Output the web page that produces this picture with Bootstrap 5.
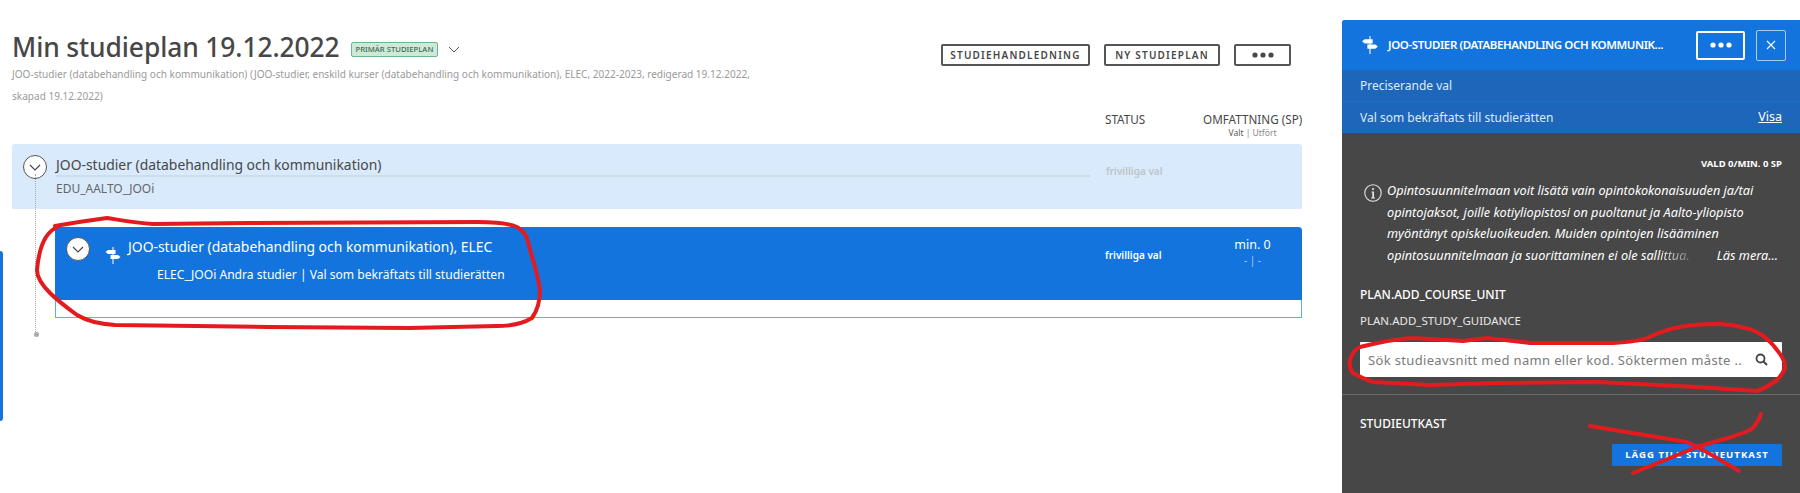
<!DOCTYPE html>
<html lang="sv">
<head>
<meta charset="utf-8">
<title>Min studieplan</title>
<link href="https://cdn.jsdelivr.net/npm/bootstrap@5.3.0/dist/css/bootstrap.min.css" rel="stylesheet">
<style>
html,body{height:493px;overflow:hidden;background:#fff}
body{font-family:"Noto Sans","Open Sans",sans-serif;color:#474747;position:relative}
.page-wrap{height:493px}
.plan-main{width:1342px;padding:29px 40px 0 12px;flex:none}
.plan-title{font-size:26.4px;font-weight:500;line-height:36px;margin:0;color:#474747;letter-spacing:-.1px}
.primary-tag{font-size:7.7px;line-height:13px;border:1px solid #6fb58a;background:#cfe8d8;color:#3d6b50;padding:0 4px;margin-left:11px;border-radius:2px;font-weight:500;margin-top:4px}
.title-chev{margin-left:10px;margin-top:4px}
.plan-sub{font-size:10.05px;line-height:22px;color:#9a9a9a;width:745px;margin-top:-2px}
.head-actions{gap:14px;margin-top:15px;margin-right:11px}
.ghost-btn{height:22px;border:2px solid #555;border-radius:2px;background:#fff;font-size:10px;font-weight:600;letter-spacing:1.2px;color:#474747;padding:0;display:flex;align-items:center;justify-content:center}
.w-guide{width:149px}.w-new{width:116px}.w-more{width:57px}
.col-heads{height:33px;margin-top:4px}
.col-status{width:98px;flex:none}
.col-scope{width:99px;flex:none;text-align:center}
.head-label{font-size:11.7px;line-height:16px;color:#474747;white-space:nowrap}
.head-hint{font-size:8.5px;line-height:12px;color:#5a5a5a;white-space:nowrap}
.head-hint span{color:#888}
.tree{position:relative;height:191px}
.tree-line{position:absolute;left:23px;top:30px;height:160px;border-left:1px dotted #aaa}
.tree-dot{position:absolute;left:21.5px;top:188px;width:5px;height:5px;border-radius:50%;background:#aaa}
.light-row{height:65px;background:#d9eafc;border-radius:3px 3px 0 0;padding:11px 0 0 11px}
.round-toggle{width:24px;height:24px;border-radius:50%;background:#fff;border:1px solid #555;flex:none;display:flex;align-items:center;justify-content:center}
.light-body{width:1034px;margin:0 16px 0 9px;flex:none}
.light-title{font-size:13.9px;line-height:20px;height:22px;border-bottom:2px solid #cfdcea;color:#474747;white-space:nowrap}
.light-code{font-size:12px;line-height:18px;margin-top:3px;color:#666}
.status-txt{font-size:10px;font-weight:600;line-height:14px;white-space:nowrap;padding-top:9px}
.faded{color:#bfc4c9}
.blue-block{margin-left:43px;margin-top:18px;height:91px;border:1px solid #6aa6e8;border-top:0;border-radius:4px 4px 0 0;background:#fff}
.blue-row{height:73px;margin:0 -1px;width:calc(100% + 2px);background:#1274dc;color:#fff;border-radius:4px 4px 0 0}
.blue-body{width:1050px;padding:10px 0 0 11px;flex:none}
.blue-icon{margin:10px 0 0 15px;flex:none}
.blue-text{margin-left:7px}
.blue-title{font-size:13.9px;line-height:20px;white-space:nowrap}
.blue-sub{font-size:12.1px;line-height:18px;margin:9px 0 0 29px;white-space:nowrap}
.status-blue{padding-top:21px}
.scope-blue{padding-top:10px}
.scope-main{font-size:12.5px;line-height:16px}
.scope-sub{font-size:10px;line-height:14px;color:#a8cdf5}
.side-tab{position:absolute;left:0;top:251px;width:3px;height:170px;background:#1274dc;border-radius:0 3px 3px 0}
.side-panel{width:458px;height:473px;margin-top:20px;background:#474747;color:#fff;border-radius:3px 0 0 0;flex:none;overflow:hidden}
.panel-head{height:50px;background:#1274dc;padding:0 14px 0 20px;border-radius:3px 0 0 0}
.panel-title{width:285px;margin-left:10px;font-size:11.5px;font-weight:600;line-height:18px;letter-spacing:-.4px;white-space:nowrap}
.panel-more{width:49px;height:29px;border:2px solid #fff;border-radius:2px;background:transparent;padding:0;margin-left:23px;display:flex;align-items:center;justify-content:center}
.panel-close{width:30px;height:31px;border:1px solid #a8cdf5;border-radius:2px;background:transparent;padding:0;margin-left:11px;display:flex;align-items:center;justify-content:center}
.panel-band{height:31px;background:#1e66ba;color:#dcebfb;font-size:12px;padding:0 18px}
.panel-band+.panel-band{border-top:1px solid #1a6fcb;height:32px}
.band-link{color:#fff;text-decoration:underline;font-size:12.5px}
.panel-body{padding:0 18px}
.pick-count{font-size:9.5px;font-weight:700;line-height:14px;margin-top:24px;text-align:right}
.info-wrap{margin-top:9px;padding-left:4px}
.info-text{font-size:12.7px;line-height:21.6px;font-style:italic;margin-left:5px;position:relative;width:391px;color:#fff;white-space:nowrap}
.read-more{position:absolute;right:0;bottom:0;font-style:italic}
.fade-word{background:linear-gradient(90deg,#fff,#777);-webkit-background-clip:text;background-clip:text;color:transparent}
.add-first{font-size:12px;font-weight:500;line-height:16px;margin-top:21px}
.add-second{font-size:11.5px;line-height:16px;margin-top:10px;color:#e8e8e8}
.search-box{height:35px;background:#fff;margin-top:13px;border-radius:1px}
.search-field{border:0;height:35px;font-size:13px;padding:0 4px 0 8px;color:#666;border-radius:0;box-shadow:none;background:transparent;letter-spacing:.34px}
.search-field::placeholder{color:#7a7a7a;opacity:1}
.search-ico{flex:none;margin:0 14px 0 6px}
.panel-rule{border-top:1px solid #6b6b6b;margin-top:17px}
.draft-head{font-size:12px;font-weight:500;line-height:16px;margin-top:21px}
.add-draft{width:170px;height:22px;background:#1274dc;color:#fff;border:0;border-radius:1px;font-size:9.6px;font-weight:700;letter-spacing:1px;padding:0;margin-top:12px;white-space:nowrap}
.ink-layer{position:absolute;left:0;top:0;pointer-events:none}
</style>
</head>
<body>
<div class="d-flex page-wrap">
  <main class="plan-main">
    <div class="d-flex justify-content-between align-items-start">
      <div>
        <div class="d-flex align-items-center">
          <h1 class="plan-title">Min studieplan 19.12.2022</h1>
          <span class="primary-tag">PRIMÄR STUDIEPLAN</span>
          <svg class="title-chev" width="12" height="7" viewBox="0 0 12 7"><path d="M1 1l5 5 5-5" fill="none" stroke="#555" stroke-width="1"/></svg>
        </div>
        <div class="plan-sub">JOO-studier (databehandling och kommunikation) (JOO-studier, enskild kurser (databehandling och kommunikation), ELEC, 2022-2023, redigerad 19.12.2022, skapad 19.12.2022)</div>
      </div>
      <div class="d-flex head-actions">
        <button class="ghost-btn w-guide" type="button">STUDIEHANDLEDNING</button>
        <button class="ghost-btn w-new" type="button">NY STUDIEPLAN</button>
        <button class="ghost-btn w-more" type="button" aria-label="Mer"><svg width="24" height="6" viewBox="0 0 24 6"><circle cx="4" cy="3" r="2.6" fill="#474747"/><circle cx="12" cy="3" r="2.6" fill="#474747"/><circle cx="20" cy="3" r="2.6" fill="#474747"/></svg></button>
      </div>
    </div>
    <div class="d-flex justify-content-end col-heads">
      <div class="col-status head-label">STATUS</div>
      <div class="col-scope">
        <div class="head-label">OMFATTNING (SP)</div>
        <div class="head-hint">Valt<span> | Utfört</span></div>
      </div>
    </div>
    <div class="tree">
      <div class="tree-line"></div>
      <div class="tree-dot"></div>
      <div class="light-row d-flex">
        <div class="round-toggle"><svg width="12" height="7" viewBox="0 0 12 7"><path d="M1 1l5 5 5-5" fill="none" stroke="#444" stroke-width="1.1"/></svg></div>
        <div class="light-body">
          <div class="light-title">JOO-studier (databehandling och kommunikation)</div>
          <div class="light-code">EDU_AALTO_JOOi</div>
        </div>
        <div class="col-status status-txt faded">frivilliga val</div>
      </div>
      <div class="blue-block">
        <div class="blue-row d-flex">
          <div class="blue-body d-flex">
            <div class="round-toggle"><svg width="12" height="7" viewBox="0 0 12 7"><path d="M1 1l5 5 5-5" fill="none" stroke="#444" stroke-width="1.1"/></svg></div>
            <svg class="blue-icon" width="16" height="17" viewBox="0 0 15 17"><path d="M7 0h1v17H7z" fill="#fff"/><path d="M2.500 3H10v4H2.500L0 5zM5 8h7.500L15 10l-2.500 2H5z" fill="#fff"/></svg>
            <div class="blue-text">
              <div class="blue-title">JOO-studier (databehandling och kommunikation), ELEC</div>
              <div class="blue-sub">ELEC_JOOi Andra studier | Val som bekräftats till studierätten</div>
            </div>
          </div>
          <div class="col-status status-txt status-blue">frivilliga val</div>
          <div class="col-scope scope-blue">
            <div class="scope-main">min. 0</div>
            <div class="scope-sub">- | -</div>
          </div>
        </div>
      </div>
    </div>
  </main>
  <aside class="side-panel">
    <div class="panel-head d-flex align-items-center">
      <svg width="16" height="18" viewBox="0 0 15 17" class="flex-none"><path d="M7 0h1v17H7z" fill="#fff"/><path d="M2.500 3H10v4H2.500L0 5zM5 8h7.500L15 10l-2.500 2H5z" fill="#fff"/></svg>
      <div class="panel-title">JOO-STUDIER (DATABEHANDLING OCH KOMMUNIK...</div>
      <button class="panel-more" type="button" aria-label="Mer"><svg width="24" height="6" viewBox="0 0 24 6"><circle cx="4" cy="3" r="2.600" fill="#fff"/><circle cx="12" cy="3" r="2.600" fill="#fff"/><circle cx="20" cy="3" r="2.600" fill="#fff"/></svg></button>
      <button class="panel-close" type="button" aria-label="Stäng"><svg width="10" height="10" viewBox="0 0 10 10"><path d="M1 1l8 8M9 1l-8 8" stroke="#fff" stroke-width="1.1"/></svg></button>
    </div>
    <div class="panel-band d-flex align-items-center">Preciserande val</div>
    <div class="panel-band d-flex align-items-center justify-content-between"><span>Val som bekräftats till studierätten</span><span class="band-link">Visa</span></div>
    <div class="panel-body">
      <div class="pick-count">VALD 0/MIN. 0 SP</div>
      <div class="d-flex info-wrap">
        <svg class="flex-none mt-1" width="18" height="18" viewBox="0 0 18 18"><circle cx="9" cy="9" r="8.200" fill="none" stroke="#e6e6e6" stroke-width="1.100"/><circle cx="9" cy="5" r="1.100" fill="#e6e6e6"/><path d="M7.500 7.500H10v6h1v1H7v-1h1.300V8.500H7.500z" fill="#e6e6e6"/></svg>
        <div class="info-text">Opintosuunnitelmaan voit lisätä vain opintokokonaisuuden ja/tai<br>opintojaksot, joille kotiyliopistosi on puoltanut ja Aalto-yliopisto<br>myöntänyt opiskeluoikeuden. Muiden opintojen lisääminen<br>opintosuunnitelmaan ja suorittaminen ei ole sall<span class="fade-word">ittua.</span><span class="read-more">Läs mera...</span></div>
      </div>
      <div class="add-first">PLAN.ADD_COURSE_UNIT</div>
      <div class="add-second">PLAN.ADD_STUDY_GUIDANCE</div>
      <div class="search-box d-flex align-items-center">
        <input class="form-control search-field" type="text" placeholder="Sök studieavsnitt med namn eller kod. Söktermen måste ..">
        <svg class="search-ico" width="13" height="13" viewBox="0 0 13 13"><circle cx="5.500" cy="5.500" r="4" fill="none" stroke="#444" stroke-width="1.800"/><path d="M8.500 8.500l3.500 3.500" stroke="#444" stroke-width="2"/></svg>
      </div>
    </div>
    <div class="panel-rule"></div>
    <div class="panel-body">
      <div class="draft-head">STUDIEUTKAST</div>
      <div class="d-flex justify-content-end"><button class="add-draft" type="button">LÄGG TILL STUDIEUTKAST</button></div>
    </div>
  </aside>
</div>
<div class="side-tab"></div>
<svg class="ink-layer" width="1800" height="493" viewBox="0 0 1800 493" fill="none" stroke="#e31b1f" stroke-width="4" stroke-linecap="round" stroke-linejoin="round">
  <path d="M55 226C72 223 92 220 107 218C120 220 135 223 153 224L249 223L478 222C497 222 510 224 517 227C524 231 527 236 528 242C532 258 538 274 540 290C540 302 537 311 532 318C522 324 510 326 497 326L409 328L268 327L115 325C98 324 87 321 77 315C66 307 58 301 50 293C42 285 37 278 37 270C38 258 41 245 46 237C50 231 54 228 61 225"/>
  <path d="M1350 360C1352 353 1355 349 1360 347C1380 342 1395 339 1413 338L1463 341L1487 338L1530 343L1613 343C1630 342 1640 341 1647 338C1660 332 1668 329 1680 327C1695 324 1708 324 1720 324C1735 325 1748 328 1757 332C1766 337 1772 343 1777 350C1782 356 1785 361 1785 367C1784 372 1781 376 1777 380C1770 385 1764 389 1757 391L1697 387L1597 382L1497 383L1430 385L1373 382C1364 379 1358 376 1353 373C1350 369 1349 365 1350 360"/>
  <path d="M1590 426L1687 442C1705 450 1722 461 1739 471"/>
  <path d="M1761 414C1758 422 1755 427 1750 430C1733 438 1715 441 1697 447C1675 456 1655 464 1633 473"/>
</svg>
<script src="https://cdn.jsdelivr.net/npm/bootstrap@5.3.0/dist/js/bootstrap.bundle.min.js"></script>
</body>
</html>
